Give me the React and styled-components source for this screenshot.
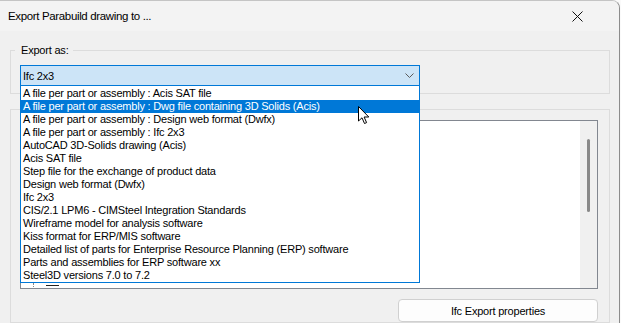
import React from "react";
import styled, { createGlobalStyle } from "styled-components";

const GlobalStyle = createGlobalStyle`
  html, body {
    margin: 0;
    padding: 0;
    background: #fafafa;
    overflow: hidden;
  }
  body {
    font-family: "Liberation Sans", Arial, sans-serif;
  }
`;

const exportTypes = [
  "A file per part or assembly : Acis SAT file",
  "A file per part or assembly : Dwg file containing 3D Solids (Acis)",
  "A file per part or assembly : Design web format (Dwfx)",
  "A file per part or assembly : Ifc 2x3",
  "AutoCAD 3D-Solids drawing (Acis)",
  "Acis SAT file",
  "Step file for the exchange of product data",
  "Design web format (Dwfx)",
  "Ifc 2x3",
  "CIS/2.1 LPM6 - CIMSteel Integration Standards",
  "Wireframe model for analysis software",
  "Kiss format for ERP/MIS software",
  "Detailed list of parts for Enterprise Resource Planning (ERP) software",
  "Parts and assemblies for ERP software xx",
  "Steel3D versions 7.0 to 7.2",
];

const Page = styled.div`
  position: relative;
  width: 621px;
  height: 323px;
`;

const Window = styled.div`
  width: 620px;
  height: 323px;
  box-sizing: border-box;
  background: #f0f0f0;
  border-right: 1px solid #8c8c8c;
  border-top: 1px solid #c4c4c4;
  border-top-right-radius: 8px;
  overflow: hidden;
`;

const TitleBar = styled.div`
  height: 30px;
  display: flex;
  align-items: center;
  justify-content: space-between;
  padding: 0 36px 0 8px;
  background: #f3f3f3;
  font-size: 11.5px;
  letter-spacing: -0.35px;
  color: #000;
`;

const Body = styled.div`
  padding: 12px 9px 0 10px;
`;

const Group = styled.fieldset`
  margin: ${(p) => (p.$gap ? `${p.$gap}px 0 0 0` : "0")};
  border: 1px solid #dcdcdc;
  padding: ${(p) => p.$pad};
  min-width: 0;
`;

const Legend = styled.legend`
  font-size: 11px;
  line-height: 14px;
  letter-spacing: -0.2px;
  padding: 0 4px 0 6px;
  margin-left: -5px;
  color: #000;
`;

const ComboWrap = styled.div`
  position: relative;
  width: 400px;
  height: 21px;
`;

const Combo = styled.div`
  box-sizing: border-box;
  height: 21px;
  display: flex;
  align-items: center;
  justify-content: space-between;
  padding: 0 5px 0 2px;
  border: 1px solid #0078d7;
  background: #cce4f7;
  font-size: 11px;
  letter-spacing: -0.2px;
`;

const DropList = styled.ul`
  position: absolute;
  top: 21px;
  left: 0;
  z-index: 2;
  box-sizing: border-box;
  width: 400px;
  margin: 0;
  padding: 1px 0 0 0;
  list-style: none;
  background: #fff;
  border: 1px solid #0078d7;
  border-top: none;
`;

const DropItem = styled.li`
  height: 13px;
  line-height: 13px;
  padding-left: 2px;
  font-size: 11px;
  letter-spacing: -0.2px;
  white-space: nowrap;
  overflow: hidden;
  color: ${(p) => (p.$selected ? "#fff" : "#000")};
  background: ${(p) => (p.$selected ? "#0078d7" : "transparent")};
`;

const ListBox = styled.div`
  box-sizing: border-box;
  height: 169px;
  display: flex;
  border: 1px solid #828790;
  background: #fff;
`;

const TreeArea = styled.div`
  flex: 1;
  display: flex;
  flex-direction: column;
  justify-content: flex-end;
  padding: 0 0 1px 12px;
`;

const TreeRow = styled.div`
  display: flex;
  align-items: flex-end;
  gap: 11px;
  height: 4px;
`;

const TreeDots = styled.span`
  width: 1px;
  height: 4px;
  border-left: 1px dotted #888;
`;

const TreeDash = styled.span`
  width: 13px;
  height: 1px;
  margin-bottom: 1px;
  background: #222;
`;

const ScrollBar = styled.div`
  width: 17px;
  display: flex;
  justify-content: center;
  padding-top: 18px;
  background: #f0f0f0;
`;

const Thumb = styled.div`
  width: 3px;
  height: 73px;
  border-radius: 2px;
  background: #8a8a8a;
`;

const ButtonRow = styled.div`
  display: flex;
  justify-content: flex-end;
  padding: 10px 0 0 0;
`;

const Button = styled.button`
  width: 200px;
  height: 23px;
  border: 1px solid #d0d0d0;
  border-radius: 4px;
  background: #fdfdfd;
  font-family: "Liberation Sans", Arial, sans-serif;
  font-size: 11px;
  letter-spacing: -0.2px;
  color: #000;
  padding: 0;
`;

const Cursor = styled.svg`
  position: absolute;
  left: 357px;
  top: 105px;
  z-index: 5;
`;

function Chevron() {
  return (
    <svg width="9" height="5" viewBox="0 0 9 5">
      <path d="M0.5 0.5 L4.5 4.5 L8.5 0.5" fill="none" stroke="#5a5a5a" strokeWidth="1" />
    </svg>
  );
}

function CloseIcon() {
  return (
    <svg width="11" height="11" viewBox="0 0 11 11">
      <path d="M0.5 0.5 L10.5 10.5 M10.5 0.5 L0.5 10.5" stroke="#111" strokeWidth="1" />
    </svg>
  );
}

export default function App() {
  return (
    <Page>
      <GlobalStyle />
      <Window>
        <TitleBar>
          <span>Export Parabuild drawing to ...</span>
          <CloseIcon />
        </TitleBar>
        <Body>
          <Group $pad="8px 9px 7px 9px">
            <Legend>Export as:</Legend>
            <ComboWrap>
              <Combo>
                <span>Ifc 2x3</span>
                <Chevron />
              </Combo>
              <DropList>
                {exportTypes.map((t, i) => (
                  <DropItem key={t} $selected={i === 1}>
                    {t}
                  </DropItem>
                ))}
              </DropList>
            </ComboWrap>
          </Group>
          <Group $gap={15} $pad="10px 11px 0 9px">
            <ListBox>
              <TreeArea>
                <TreeRow>
                  <TreeDots />
                  <TreeDash />
                </TreeRow>
              </TreeArea>
              <ScrollBar>
                <Thumb />
              </ScrollBar>
            </ListBox>
            <ButtonRow>
              <Button>Ifc Export properties</Button>
            </ButtonRow>
          </Group>
        </Body>
      </Window>
      <Cursor width="13" height="20" viewBox="0 0 13 20">
        <path
          d="M1.5 1.5 L1.5 16 L5 12.8 L7.5 18.5 L9.6 17.6 L7.1 12 L11.8 12 Z"
          fill="#fff"
          stroke="#000"
          strokeWidth="1"
          strokeLinejoin="miter"
        />
      </Cursor>
    </Page>
  );
}
